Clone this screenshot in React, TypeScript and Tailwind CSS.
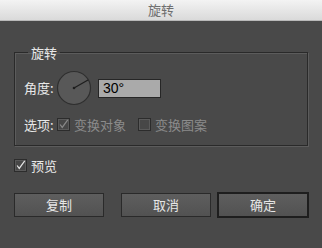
import React from "react";

const font = { fontFamily: '"Noto Sans CJK SC", "Noto Sans", sans-serif' };

function Check({ checked, disabled }: { checked: boolean; disabled?: boolean }) {
  const stroke = disabled ? "#8a8a8a" : "#e6e6e6";
  return (
    <span className="inline-flex w-[13px] h-[13px] border border-[#2c2c2c] bg-[#474747] shadow-[inset_0_0_0_1px_#5a5a5a] items-center justify-center">
      {checked && (
        <svg width="13" height="13" viewBox="0 0 13 13">
          <path d="M2.5 6.5 L5 10 L11.5 1" fill="none" stroke={stroke} strokeWidth="1.4" />
        </svg>
      )}
    </span>
  );
}

export default function App() {
  return (
    <div className="w-[322px] h-[248px] bg-[#494949] flex flex-col text-[13px]" style={font}>
      <div className="h-[21px] shrink-0 bg-gradient-to-b from-[#f3f3f3] to-[#dadada] border-b border-[#b9b9b9] flex items-center justify-center text-[13px] text-[#6e6e6e]">
        旋转
      </div>
      <fieldset className="mx-[14px] mt-[23px] w-[294px] h-[102px] shrink-0 border border-[#2a2a2a] shadow-[inset_1px_1px_0_#5c5c5c,1px_1px_0_#5c5c5c] px-[9px] pt-[9px] flex flex-col gap-[10px]">
        <legend className="ml-[4px] px-[3px] text-[#e8e8e8] leading-[17px]">旋转</legend>
        <div className="flex items-center h-[36px]">
          <span className="text-[#e8e8e8] w-[33px]">角度:</span>
          <svg width="36" height="36" viewBox="0 0 36 36" className="-ml-[1px]">
            <circle cx="18" cy="18" r="16.5" fill="#585858" stroke="#2f2f2f" strokeWidth="1.2" />
            <line x1="18" y1="18" x2="32" y2="10" stroke="#1e1e1e" strokeWidth="1.3" />
            <circle cx="18" cy="18" r="1.3" fill="#1e1e1e" />
          </svg>
          <div className="ml-[6px] w-[63px] h-[19px] bg-[#aaaaaa] border border-[#262626] text-[14px] leading-[17px] text-black pl-[4px]" style={{ fontFamily: '"Liberation Sans", sans-serif' }}>
            30°
          </div>
        </div>
        <div className="flex items-center h-[17px]">
          <span className="text-[#e8e8e8] w-[33px]">选项:</span>
          <Check checked disabled />
          <span className="ml-[4px] text-[#8b8b8b]">变换对象</span>
          <span className="ml-[12px] flex"><Check checked={false} disabled /></span>
          <span className="ml-[4px] text-[#8b8b8b]">变换图案</span>
        </div>
      </fieldset>
      <div className="mt-[11px] ml-[14px] flex items-center h-[17px]">
        <Check checked />
        <span className="ml-[4px] text-[#e8e8e8]">预览</span>
      </div>
      <div className="mt-[18px] ml-[14px] flex items-center">
        <button className="w-[90px] h-[24px] border border-[#2a2a2a] bg-gradient-to-b from-[#5e5e5e] to-[#525252] text-[#e6e6e6]">复制</button>
        <button className="ml-[17px] w-[90px] h-[24px] border border-[#2a2a2a] bg-gradient-to-b from-[#5e5e5e] to-[#525252] text-[#e6e6e6]">取消</button>
        <button className="ml-[6px] w-[92px] h-[26px] border-2 border-[#1e1e1e] bg-gradient-to-b from-[#5e5e5e] to-[#525252] text-[#e6e6e6]">确定</button>
      </div>
    </div>
  );
}
